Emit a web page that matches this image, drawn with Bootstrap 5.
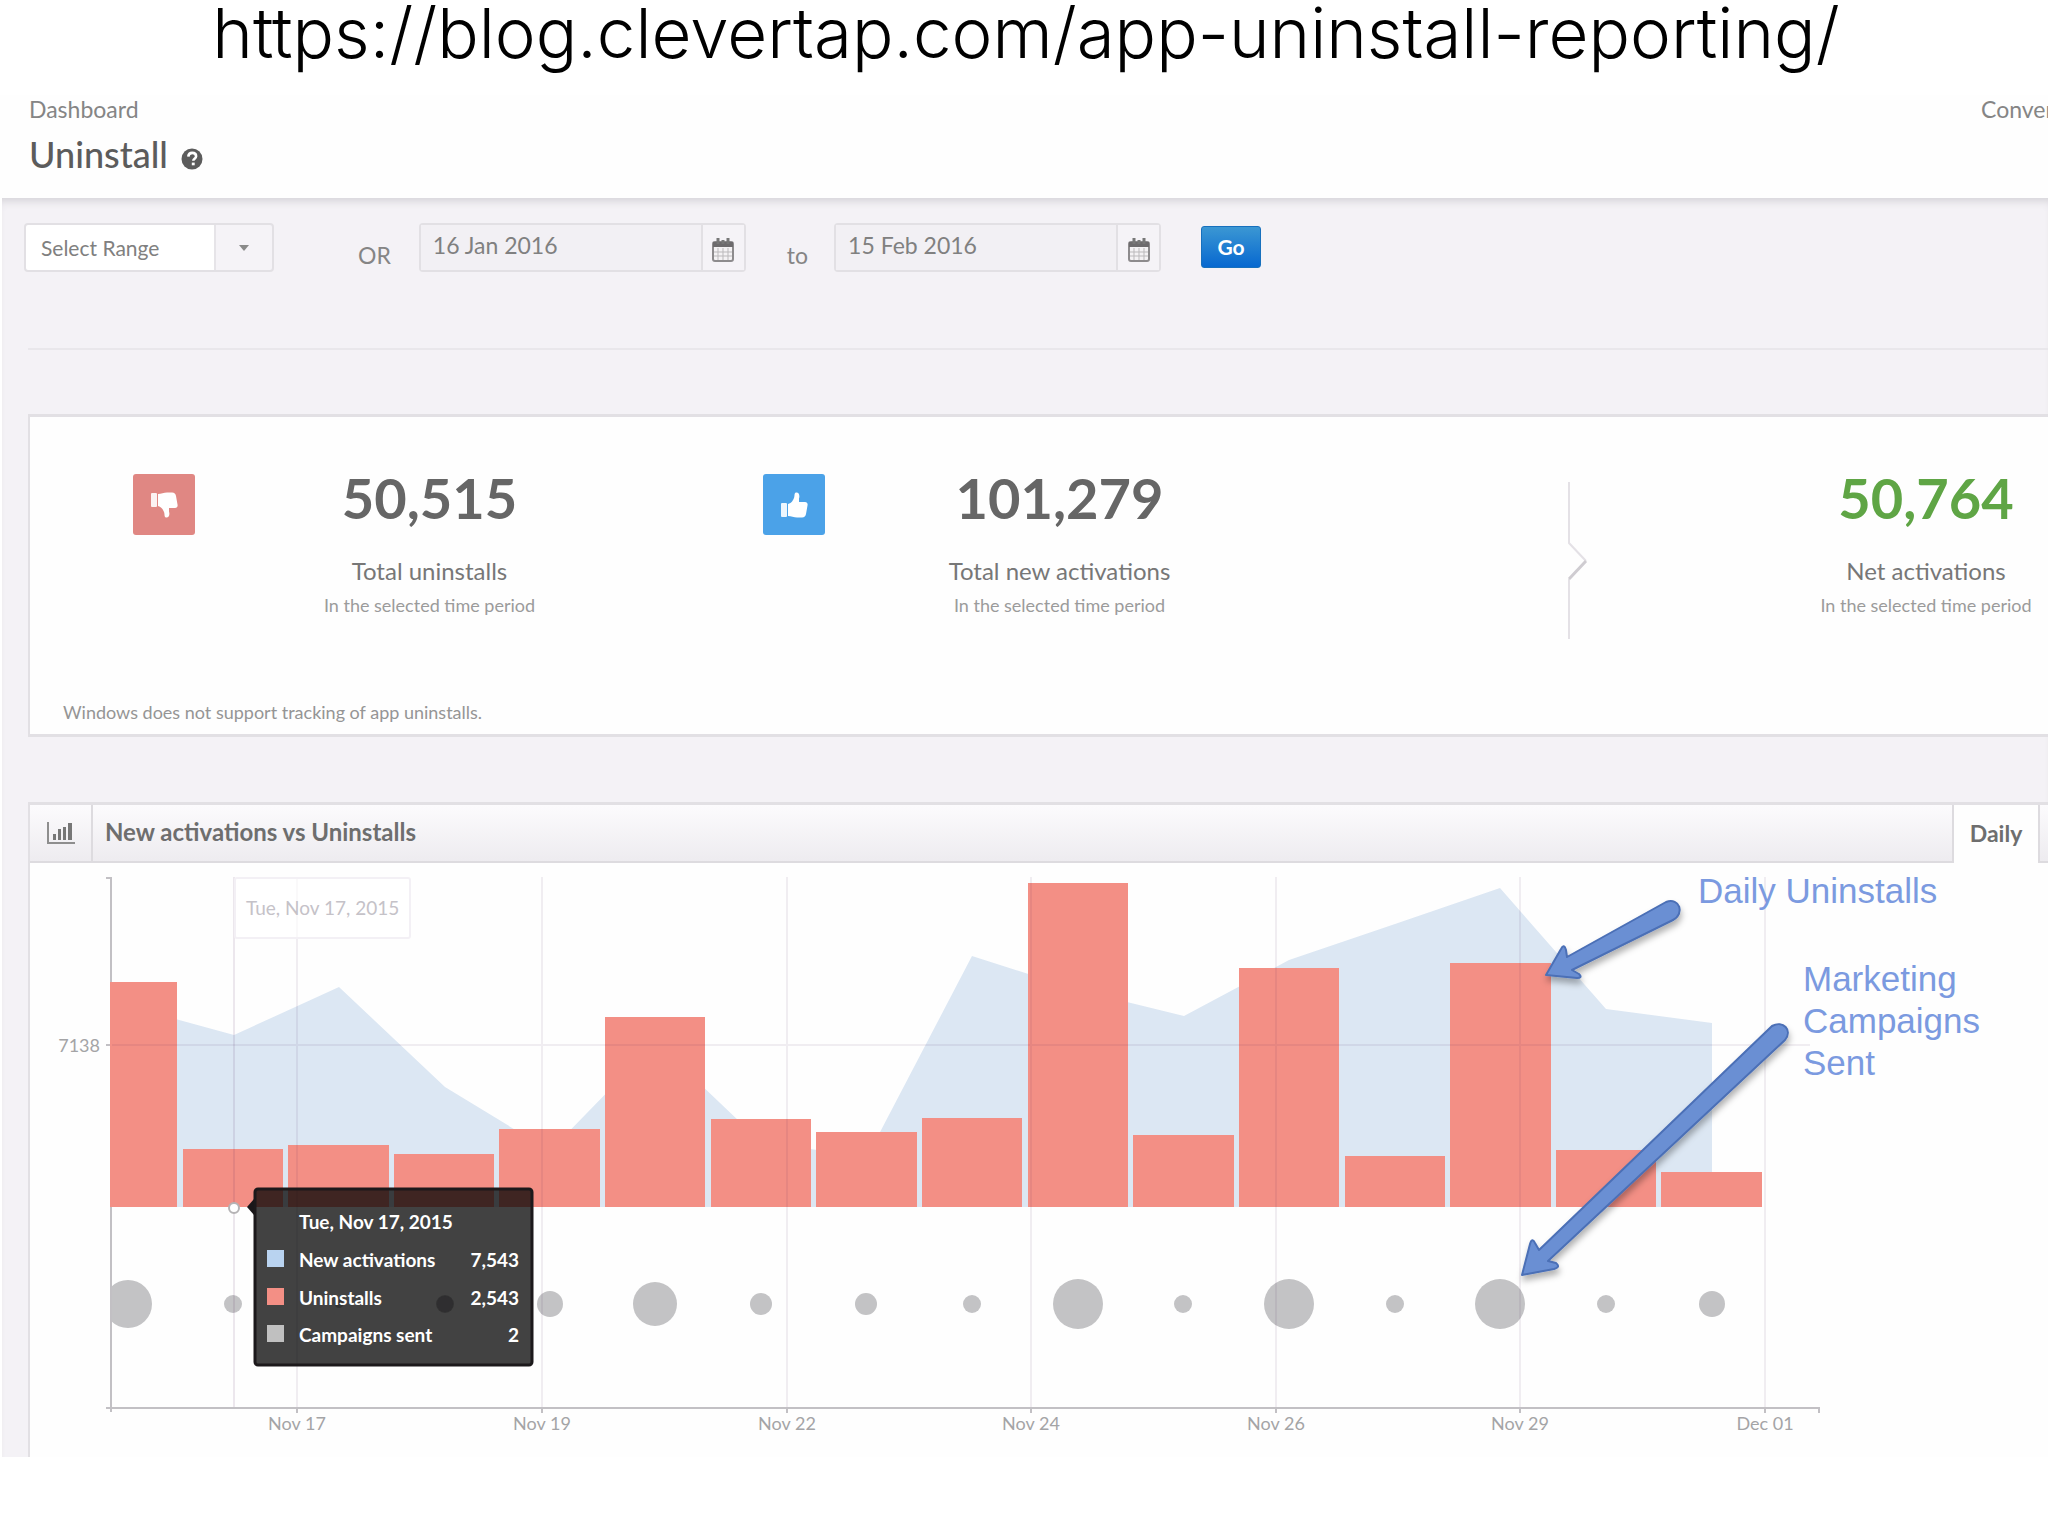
<!DOCTYPE html>
<html lang="en">
<head>
<meta charset="utf-8">
<meta name="viewport" content="width=device-width, initial-scale=1">
<title>Uninstall dashboard</title>
<link href="https://cdn.jsdelivr.net/npm/bootstrap@5.3.0/dist/css/bootstrap.min.css" rel="stylesheet">
<style>
  body { font-family: Lato, "Liberation Sans", sans-serif; font-size: 23px; line-height: 28px; color: #777; background: #fff; overflow-x: hidden; }
  .source-url { font-family: Inter, "Liberation Sans", sans-serif; font-weight: 300; font-size: 69px; line-height: 66px; color: #000; height: 95px; padding-left: 4px; white-space: nowrap; }
  .page-head { height: 103px; padding-left: 29px; background: #fefefe; }
  .page-head a { color: #858585; text-decoration: none; }
  .page-head h1 { font-size: 36px; line-height: 46px; color: #5c5c5c; }
  .help-icon { margin: 18px 0 0 13px; }
  .clipped-link { width: 67px; overflow: hidden; white-space: nowrap; }
  .workspace { background: #f4f2f6; margin-left: 2px; box-shadow: inset 0 8px 8px -5px #d4d2d7; padding-left: 26px; }
  .filters { padding: 25px 0 76px; border-bottom: 2px solid #e9e7eb; }
  .range-select { width: 250px; height: 49px; border: 2px solid #e2e0e4; border-radius: 4px; padding: 0 0 0 15px; color: #808080; font-size: 21px; appearance: none;
    background: linear-gradient(90deg, #fff 188px, #e6e4e8 188px, #e6e4e8 190px, #f5f3f7 190px); }
  .select-wrap { position: relative; margin-left: -4px; }
  .select-wrap svg { position: absolute; right: 25px; top: 22px; pointer-events: none; }
  .filters label { padding-top: 18px; color: #858585; }
  .or-label { margin: 0 28px 0 84px; }
  .to-label { margin: 0 26px 0 41px; }
  .date-group { width: 327px; height: 49px; border: 2px solid #e2e0e4; border-radius: 4px; }
  .date-group input { background: #f2f0f4; border: 0; color: #808080; padding: 0 0 5px 12px; min-width: 0; flex: 1; }
  .date-group button { width: 43px; border: 0; border-left: 2px solid #e2e0e4; background: #f5f3f7; padding: 0; }
  .go-btn { width: 60px; height: 42px; margin: 3px 0 0 40px; padding: 0; border: 1px solid #1770bd; border-radius: 3px; background: linear-gradient(#3b97d3, #0768d0); color: #fff; font-weight: 700; font-size: 21px; line-height: 36px; }
  .panel-box { background: #fefefe; border: solid #e2e0e4; border-width: 3px 0 3px 2px; }
  .totals { margin-top: 64px; }
  .stat-grid { display: grid; grid-template-columns: 630fr 630fr 298fr 460fr; padding-top: 57px; }
  .stat-icon { width: 62px; height: 61px; border-radius: 3px; margin: 0 4px 0 103px; flex: none; }
  .tile-down { background: #e08783; }
  .tile-up { background: #4ba2e8; }
  .stat-value { font-size: 56px; line-height: 48px; font-weight: 700; color: #666; }
  .net-stat .stat-value { color: #5fa545; }
  .stat-name { font-size: 24px; line-height: 30px; margin-top: 34px; color: #777; }
  .stat-note { font-size: 18px; line-height: 24px; margin-top: 7px; color: #9b9b9b; }
  .net-stat { padding-left: 216px; white-space: nowrap; }
  .foot-note { padding: 61px 0 10px 33px; color: #959595; font-size: 18px; line-height: 24px; }
  .chart-panel { margin-top: 65px; border-bottom: 0; }
  .chart-head { height: 58px; background: linear-gradient(#fcfbfd, #edebef); }
  .chart-head > * { border-bottom: 2px solid #dddbdf; }
  .chart-mark { width: 63px; border-right: 2px solid #dddbdf; }
  .chart-head h2 { font-size: 24px; line-height: 28px; color: #6e6e6e; font-weight: 700; padding: 13px 0 0 12px; }
  .tab-daily { width: 88px; background: #fefefe; border: solid #dddbdf; border-width: 0 2px; color: #6e6e6e; font-weight: 700; font-size: 23px; padding: 0 0 3px; }
  .tab-next { width: 8px; }
  .chart { display: block; width: 100%; height: auto; font-family: Lato, "Liberation Sans", sans-serif; font-size: 18px; }
  .axis-text { fill: #a4a4a6; }
  .tip-text { fill: #fff; font-weight: 700; font-size: 19px; }
  .callout { font-family: "Liberation Sans", Arial, sans-serif; font-size: 35px; fill: #7b9ae0; }
</style>
</head>
<body>
<div class="source-url text-center">https://blog.clevertap.com/app-uninstall-reporting/</div>

<header class="page-head d-flex justify-content-between">
  <div>
    <a href="#" class="d-block">Dashboard</a>
    <div class="d-flex align-items-center">
      <h1 class="mb-0 mt-2">Uninstall</h1>
      <svg class="help-icon" width="22" height="22" viewBox="0 0 22 22" role="img" aria-label="Help"><circle cx="11" cy="11" r="10.500" fill="#5c5c5c"/><path d="M7.300 8.600c.2-2.500 1.800-3.700 3.900-3.700 2.200 0 3.900 1.300 3.900 3.300 0 2.500-2.800 2.600-2.800 4.600" fill="none" stroke="#fff" stroke-width="2.600"/><rect x="10.800" y="14.600" width="2.900" height="2.700" fill="#fff"/></svg>
    </div>
  </div>
  <a href="#" class="clipped-link">Conver</a>
</header>

<main class="workspace">
  <form class="filters d-flex align-items-start">
    <div class="select-wrap">
      <select class="range-select" aria-label="Range"><option>Select Range</option></select>
      <svg width="10" height="6" viewBox="0 0 10 6"><path d="M0 0h10L5 6z" fill="#8a8a8a"/></svg>
    </div>
    <label for="from" class="or-label">OR</label>
    <div class="date-group d-flex">
      <input id="from" type="text" value="16 Jan 2016">
      <button type="button" aria-label="Open calendar"><svg width="22" height="24" viewBox="0 0 22 24"><use href="#cal"/></svg></button>
    </div>
    <label for="until" class="to-label">to</label>
    <div class="date-group d-flex">
      <input id="until" type="text" value="15 Feb 2016">
      <button type="button" aria-label="Open calendar"><svg width="22" height="24" viewBox="0 0 22 24"><use href="#cal"/></svg></button>
    </div>
    <button type="submit" class="go-btn">Go</button>
  </form>

  <section class="panel-box totals">
    <div class="stat-grid text-center">
      <div class="d-flex">
        <div class="stat-icon tile-down d-flex align-items-center justify-content-center">
          <svg width="28" height="28" viewBox="0 0 28 26"><g transform="matrix(1 0 0 -1 0 26)" fill="#fff"><use href="#thumb"/></g></svg>
        </div>
        <div class="flex-fill"><div class="stat-value">50,515</div><div class="stat-name">Total uninstalls</div><div class="stat-note">In the selected time period</div></div>
      </div>
      <div class="d-flex">
        <div class="stat-icon tile-up d-flex align-items-center justify-content-center">
          <svg width="28" height="28" viewBox="0 0 28 26" fill="#fff"><use href="#thumb"/></svg>
        </div>
        <div class="flex-fill"><div class="stat-value">101,279</div><div class="stat-name">Total new activations</div><div class="stat-note">In the selected time period</div></div>
      </div>
      <div class="text-end"><svg class="mt-2" width="21" height="157" viewBox="0 0 21 157" fill="none" stroke-width="2"><path d="M2 0v61l17 18M2 97v60" stroke="#e4e1e6"/><path d="M19 79 2 97" stroke="#cfccd1" stroke-width="3"/></svg></div>
      <div class="net-stat"><div class="stat-value">50,764</div><div class="stat-name">Net activations</div><div class="stat-note">In the selected time period</div></div>
    </div>
    <div class="foot-note">Windows does not support tracking of app uninstalls.</div>
  </section>

  <section class="panel-box chart-panel">
    <div class="chart-head d-flex">
      <div class="chart-mark d-flex align-items-center justify-content-center">
        <svg width="28" height="22" viewBox="0 0 28 22"><path d="M1 0v21h27" fill="none" stroke="#8e8e8e" stroke-width="2"/><path d="M6 12h3v6H6zM11 7h3v11h-3zM16 5h3v13h-3zM21 1h4v17h-4z" fill="#777"/></svg>
      </div>
      <h2 class="mb-0 flex-fill">New activations vs Uninstalls</h2>
      <button type="button" class="tab-daily border-bottom-0">Daily</button>
      <div class="tab-next"></div>
    </div>
    <svg class="chart" viewBox="30 863 2018 594" role="img" aria-label="New activations vs Uninstalls">
      <defs>
        <filter id="soft" x="-10%" y="-10%" width="120%" height="130%"><feDropShadow dx="1" dy="5" stdDeviation="3" flood-color="#000" flood-opacity=".3"/></filter>
        <clipPath id="plot"><rect x="111" y="870" width="1720" height="540"/></clipPath>
      </defs>
      <path d="M128 1207V1006L234 1035 339 987 445 1087 550 1151 656 1042 761 1142 867 1157 972 956 1078 990 1184 1016 1289 960 1395 924 1500 888 1606 1009 1712 1023V1207z" fill="#dce7f3"/>
      <path fill="#f38f85" d="M111 982h66v225h-66zM183 1149h100v58H183zM288 1145h101v62H288zM394 1154h100v53H394zM499 1129h101v78H499zM605 1017h100v190H605zM711 1119h100v88H711zM816 1132h101v75H816zM922 1118h100v89H922zM1028 883h100v324h-100zM1133 1135h101v72h-101zM1239 968h100v239h-100zM1345 1156h100v51h-100zM1450 963h101v244h-101zM1556 1150h100v57h-100zM1661 1172h101v35h-101z"/>
      <g fill="#c3c3c5" clip-path="url(#plot)">
        <circle cx="128" cy="1304" r="24"/><circle cx="233" cy="1304" r="9"/><circle cx="339" cy="1304" r="4"/><circle cx="445" cy="1304" r="9"/><circle cx="550" cy="1304" r="13"/><circle cx="655" cy="1304" r="22"/><circle cx="761" cy="1304" r="11"/><circle cx="866" cy="1304" r="11"/><circle cx="972" cy="1304" r="9"/><circle cx="1078" cy="1304" r="25"/><circle cx="1183" cy="1304" r="9"/><circle cx="1289" cy="1304" r="25"/><circle cx="1395" cy="1304" r="9"/><circle cx="1500" cy="1304" r="25"/><circle cx="1606" cy="1304" r="9"/><circle cx="1712" cy="1304" r="13"/>
      </g>
      <path d="M297 877v530M542 877v530M787 877v530M1031 877v530M1276 877v530M1520 877v530M1765 877v530M111 1045h1699" stroke="#4a2055" stroke-opacity=".08" stroke-width="2" fill="none"/>
      <path d="M234 877v530" stroke="#4a2055" stroke-opacity=".1" stroke-width="2"/>
      <path d="M106 878h5v534M106 1045h5M106 1408h1713v5M297 1408v5M542 1408v5M787 1408v5M1031 1408v5M1276 1408v5M1520 1408v5M1765 1408v5" stroke="#c2c0c4" stroke-width="2" fill="none"/>
      <path d="M111 982v225" stroke="#f38f85" stroke-width="2"/>
      <rect x="235" y="878" width="175" height="60" rx="2" fill="#fff" fill-opacity=".65" stroke="#f3f0f5" stroke-width="2"/>
      <text x="246" y="915" font-size="19" fill="#c5c2c8">Tue, Nov 17, 2015</text>
      <g class="axis-text">
        <text x="100" y="1052" text-anchor="end">7138</text>
        <g text-anchor="middle"><text x="297" y="1430">Nov 17</text><text x="542" y="1430">Nov 19</text><text x="787" y="1430">Nov 22</text><text x="1031" y="1430">Nov 24</text><text x="1276" y="1430">Nov 26</text><text x="1520" y="1430">Nov 29</text><text x="1765" y="1430">Dec 01</text></g>
      </g>
      <circle cx="234" cy="1208" r="5" fill="#fff" stroke="#b5b3b5" stroke-width="2"/>
      <path d="M254 1199l-7 8 7 8z" fill="#1a1719"/>
      <rect x="255" y="1189" width="277" height="176" rx="3" fill="#000" fill-opacity=".74" stroke="#1c191b" stroke-width="3"/>
      <circle cx="445" cy="1304" r="8" fill="#2f2e30"/>
      <path d="M267 1250h17v17h-17z" fill="#b9d3f0"/><path d="M267 1288h17v17h-17z" fill="#f38f85"/><path d="M267 1325h17v17h-17z" fill="#c0c0c0"/>
      <g class="tip-text">
        <text x="299" y="1229">Tue, Nov 17, 2015</text>
        <text x="299" y="1267">New activations</text><text x="519" y="1267" text-anchor="end">7,543</text>
        <text x="299" y="1305">Uninstalls</text><text x="519" y="1305" text-anchor="end">2,543</text>
        <text x="299" y="1342">Campaigns sent</text><text x="519" y="1342" text-anchor="end">2</text>
      </g>
      <g fill="#6b8fd3" stroke="#4b6fb6" stroke-width="2" stroke-linejoin="round" filter="url(#soft)">
        <path d="M1546 975 1561 949Q1564 943 1566 950L1567 957 1666 902C1680 897 1685 914 1673 920L1572 970 1579 974Q1583 978 1577 978z"/>
        <path d="M1522 1275 1530 1244Q1532 1237 1535 1243L1539 1250 1772 1026C1783 1020 1793 1030 1785 1040L1548 1261 1556 1263Q1561 1267 1554 1269z"/>
      </g>
      <g class="callout"><text x="1698" y="903">Daily Uninstalls</text><text x="1803" y="991">Marketing</text><text x="1803" y="1033">Campaigns</text><text x="1803" y="1075">Sent</text></g>
    </svg>
  </section>
</main>

<svg width="0" height="0" class="position-absolute" aria-hidden="true">
  <symbol id="cal" viewBox="0 0 22 24" overflow="visible"><rect x="1" y="4" width="20" height="19" rx="2" fill="#f4f2f4" stroke="#8d8b8d" stroke-width="2"/><path d="M1 4h20v5H1z" fill="#6d6b6d"/><path d="M6 0v6M11 2v4M16 0v6" stroke="#777" stroke-width="3"/><path d="M6 10v12M11 10v12M16 10v12M2 14h18M2 18h18" stroke="#bbb9bb" stroke-width="1"/></symbol>
  <symbol id="thumb" viewBox="0 0 28 26"><rect x="1" y="11" width="6" height="14" rx="1" fill-opacity=".9"/><path d="M8 12c4-1 5-4 6-6 1-3 0-5 2-5.500 3-.4 4 3 3 6L19 10h6c2 0 3 1.500 2.500 3.500L26 22c-.5 2-1.500 3.500-4 3.500h-5c-3 0-6-1.500-9-1.500z"/></symbol>
</svg>
<script src="https://cdn.jsdelivr.net/npm/bootstrap@5.3.0/dist/js/bootstrap.bundle.min.js"></script>
</body>
</html>
